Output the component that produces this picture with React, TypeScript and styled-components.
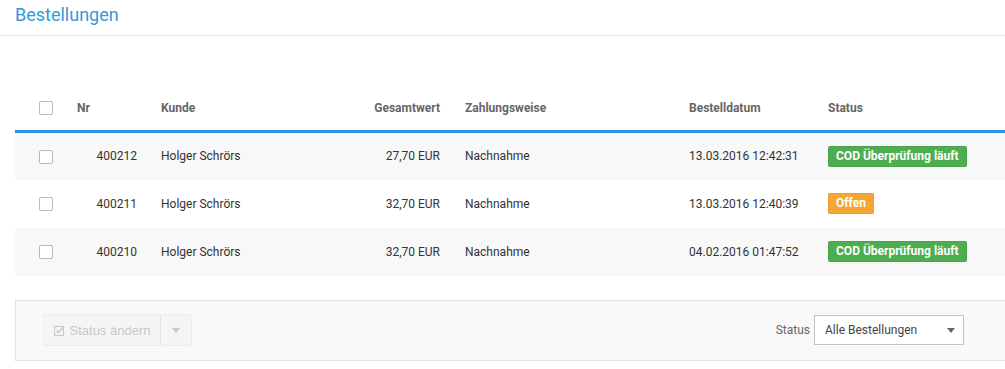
import React from 'react';
import styled, { createGlobalStyle } from 'styled-components';

const GlobalStyle = createGlobalStyle`
  html, body {
    margin: 0;
    padding: 0;
    background: #fff;
    font-family: Roboto, "Liberation Sans", sans-serif;
    overflow: hidden;
  }
`;

const Page = styled.div`
  width: 1005px;
`;

const TitleBar = styled.div`
  height: 36px;
  border-bottom: 1px solid #e6e6e6;
  padding-left: 15px;
  box-sizing: border-box;
`;

const Title = styled.h1`
  margin: 0;
  padding-top: 4px;
  font-size: 18px;
  font-weight: 400;
  line-height: 22px;
  color: #3598dc;
`;

const Table = styled.table`
  margin: 50px 0 0 15px;
  width: 990px;
  border-collapse: collapse;
  font-size: 12px;
  color: #333;
`;

const HeadCell = styled.th<{ $align?: string; $w?: number }>`
  height: 44px;
  padding: 0;
  text-align: ${(p) => p.$align || 'left'};
  font-weight: 700;
  color: #666;
  width: ${(p) => (p.$w ? `${p.$w}px` : 'auto')};
  border-bottom: 3px solid #2e8ee0;
`;

const Row = styled.tr<{ $striped?: boolean }>`
  height: 48px;
  background: ${(p) => (p.$striped ? '#f8f8f8' : '#fff')};
`;

const Cell = styled.td<{ $align?: string; $pr?: number }>`
  padding: 0 ${(p) => p.$pr || 0}px 0 0;
  text-align: ${(p) => p.$align || 'left'};
`;

const Check = styled.span`
  display: inline-block;
  width: 12px;
  height: 12px;
  border: 1px solid #b9b9b9;
  border-radius: 2px;
  background: #fff;
  margin-left: 24px;
  vertical-align: middle;
`;

const Badge = styled.span<{ $color: string }>`
  display: inline-block;
  background: ${(p) => p.$color};
  color: #fff;
  font-weight: 700;
  font-size: 12px;
  line-height: 19px;
  padding: 0 7px;
  border-radius: 2px;
  border: 1px solid rgba(0, 0, 0, 0.06);
`;

const Footer = styled.div`
  margin: 24px 0 0 15px;
  height: 61px;
  box-sizing: border-box;
  border: 1px solid #e2e2e2;
  border-right: none;
  background: #f9f9f9;
  display: flex;
  align-items: center;
  justify-content: space-between;
  padding: 0 41px 0 27px;
`;

const ButtonGroup = styled.div`
  display: flex;
  height: 30px;
  border: 1px solid #ececec;
  border-radius: 2px;
  background: #f5f5f5;
  font-family: "Liberation Sans", Arial, sans-serif;
  font-size: 13px;
  color: #c8c8c8;
`;

const GroupButton = styled.div<{ $w: number }>`
  width: ${(p) => p.$w}px;
  display: flex;
  align-items: center;
  justify-content: center;
  gap: 5px;
  & + & {
    border-left: 1px solid #e6e6e6;
  }
`;

const FilterWrap = styled.div`
  display: flex;
  align-items: center;
  gap: 4px;
  font-size: 12px;
  color: #666;
`;

const Select = styled.div`
  width: 150px;
  height: 30px;
  box-sizing: border-box;
  border: 1px solid #c2c2c2;
  background: #fff;
  display: flex;
  align-items: center;
  justify-content: space-between;
  padding: 0 8px 0 10px;
  color: #444;
  font-size: 12px;
`;

const Caret = ({ color }: { color: string }) => (
  <svg width="8" height="5" viewBox="0 0 8 5">
    <path d="M0 0h8L4 5z" fill={color} />
  </svg>
);

const CheckIcon = () => (
  <svg width="11" height="11" viewBox="0 0 11 11">
    <rect x="0.5" y="1.5" width="9" height="9" fill="none" stroke="#c8c8c8" />
    <path d="M2.5 5.5l2 2L10 1.5" fill="none" stroke="#c8c8c8" strokeWidth="1.4" />
  </svg>
);

const orders = [
  { nr: '400212', kunde: 'Holger Schrörs', wert: '27,70 EUR', zahl: 'Nachnahme', datum: '13.03.2016 12:42:31', status: 'COD Überprüfung läuft', color: '#4cae50' },
  { nr: '400211', kunde: 'Holger Schrörs', wert: '32,70 EUR', zahl: 'Nachnahme', datum: '13.03.2016 12:40:39', status: 'Offen', color: '#f5a634' },
  { nr: '400210', kunde: 'Holger Schrörs', wert: '32,70 EUR', zahl: 'Nachnahme', datum: '04.02.2016 01:47:52', status: 'COD Überprüfung läuft', color: '#4cae50' },
];

export default function App() {
  return (
    <Page>
      <GlobalStyle />
      <TitleBar>
        <Title>Bestellungen</Title>
      </TitleBar>
      <Table>
        <thead>
          <tr>
            <HeadCell $w={62}>
              <Check />
            </HeadCell>
            <HeadCell $w={84}>Nr</HeadCell>
            <HeadCell $w={140}>Kunde</HeadCell>
            <HeadCell $w={139} $align="right">Gesamtwert</HeadCell>
            <HeadCell $w={25} />
            <HeadCell $w={224}>Zahlungsweise</HeadCell>
            <HeadCell $w={139}>Bestelldatum</HeadCell>
            <HeadCell>Status</HeadCell>
          </tr>
        </thead>
        <tbody>
          {orders.map((o, i) => (
            <Row key={o.nr} $striped={i % 2 === 0}>
              <Cell>
                <Check />
              </Cell>
              <Cell $align="right" $pr={24}>{o.nr}</Cell>
              <Cell>{o.kunde}</Cell>
              <Cell $align="right">{o.wert}</Cell>
              <Cell />
              <Cell>{o.zahl}</Cell>
              <Cell>{o.datum}</Cell>
              <Cell>
                <Badge $color={o.color}>{o.status}</Badge>
              </Cell>
            </Row>
          ))}
        </tbody>
      </Table>
      <Footer>
        <ButtonGroup>
          <GroupButton $w={116}>
            <CheckIcon />
            Status ändern
          </GroupButton>
          <GroupButton $w={30}>
            <Caret color="#c8c8c8" />
          </GroupButton>
        </ButtonGroup>
        <FilterWrap>
          Status
          <Select>
            Alle Bestellungen
            <Caret color="#666" />
          </Select>
        </FilterWrap>
      </Footer>
    </Page>
  );
}
